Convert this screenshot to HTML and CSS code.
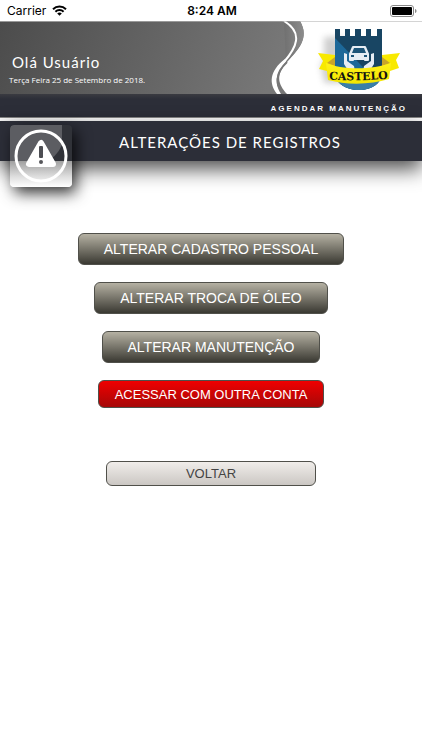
FILE: index.html
```html
<!DOCTYPE html>
<html lang="pt-br">
<head>
   <meta charset="UTF-8">
   <meta name="viewport" content="width=device-width, initial-scale=1.0">
   <title>Castelo</title>
   <link rel="stylesheet" href="styles.css">
</head>

<body>
   <div class="status">
      <div class="operadora">
         <span>Carrier</span>
         <svg width="15" height="11" viewBox="0 0 15 11" fill="none" stroke="#000" stroke-width="2">
            <path d="M1 4.2C4.6.7 10.4.7 14 4.2"/>
            <path d="M3.4 6.7c2.3-2.2 5.9-2.2 8.2 0"/>
            <path d="M5.2 8.4c1.3-1.2 3.3-1.2 4.6 0L7.5 10.8z" fill="#000" stroke="none"/>
         </svg>
      </div>
      <div class="hora">8:24 AM</div>
      <svg class="bateria" width="27" height="12" viewBox="0 0 27 12">
         <rect x=".5" y=".5" width="23" height="11" rx="2.5" fill="#fff" stroke="#888"/>
         <rect x="2" y="2" width="20" height="8" rx="1" fill="#000"/>
         <path d="M25 4c2 .6 2 3.400 0 4z" fill="#888"/>
      </svg>
   </div>

   <header>
      <div class="topo">
         <div class="saudacao">
            <h2>Olá Usuário</h2>
            <p>Terça Feira 25 de Setembro de 2018.</p>
         </div>

         <svg class="marca" width="160" height="73" viewBox="0 0 160 73" role="img" aria-label="Castelo">
            <defs>
               <filter id="sombra" x="-30%" y="-30%" width="160%" height="160%">
                  <feGaussianBlur stdDeviation="3"/>
               </filter>
               <linearGradient id="faixa" x1="0" x2="0" y1="0" y2="1">
                  <stop offset="0" stop-color="#fff21a"/>
                  <stop offset="1" stop-color="#f3e500"/>
               </linearGradient>
               <linearGradient id="curva" x1="0" x2="1" y1="0" y2="0">
                  <stop offset="0" stop-color="#707070"/>
                  <stop offset="1" stop-color="#8c8c8c"/>
               </linearGradient>
               <clipPath id="escudo">
                  <path d="M73 8h5v7h5V8h5v7h5V8h6v7h5V8h5v7h6V8h5v44c0 10-10 17-23 17S73 62 73 52z"/>
               </clipPath>
            </defs>

            <!-- curva -->
            <path d="M38 0C48 17 36 29 26 40 13 54 16 63 25 73H160V0z" fill="#fff"/>
            <path d="M22 0h16C48 17 36 29 24 41z" fill="url(#curva)"/>
            <path d="M22 0C42 12 34 27 22 41" fill="none" stroke="#fff" stroke-width="2"/>
            <path d="M23 38C7 50 7 63 15 73h4C11 60 15 51 24 41z" fill="#fff"/>
            <path d="M25 41C13 52 13 64 22 73" fill="none" stroke="#777" stroke-width="2"/>
            <path d="M160 0H20" stroke="#aaa" stroke-width="1"/>

            <!-- logo -->
            <path d="M62 16h20v46H62zM58 42h20v18H62z" fill="#777" opacity=".35" filter="url(#sombra)"/>
            <g clip-path="url(#escudo)">
               <path d="M73 0h47v73H73z" fill="#184563"/>
               <path d="M73 17l50 52v4H73z" fill="#1d6899"/>
               <path d="M73 60h50v10H73z" fill="#3a7fa8"/>
            </g>
            <path d="M91 26h12l3 7v6h-3v-1H91v1h-3v-6z" fill="#e6edf4" stroke="#e6edf4" stroke-width="2" stroke-linejoin="round"/>
            <path d="M92 27h10l2 5H90z" fill="#1d5478"/>
            <path d="M89 35h3m10 0h3" stroke="#1d5478" stroke-width="2"/>
            <path d="M82 32l3 1v7l7 5 1 6h-6l-5-8zM112 32l-3 1v7l-7 5-1 6h6l5-8z" fill="#e6edf4"/>
            <path d="M56 32l17 2v16l-8 0-8-2 4-8zM138 32l-18 2v16l8 0 9-3-3-8z" fill="#f8e900"/>
            <path d="M65 42l8-6v9zM128 42l-8-6v9z" fill="#c9a52a"/>
            <path d="M64 42C80 49 110 49 129 42l-2 16C108 64 84 64 66 59z" fill="url(#faixa)"/>
            <path id="arco" d="M62 58Q96 61 131 57" fill="none"/>
            <text class="nome"><textPath href="#arco" startOffset="50%">CASTELO</textPath></text>
         </svg>
      </div>
      <div class="agendar"><a href="#">AGENDAR MANUTENÇÃO</a></div>
   </header>

   <div class="titulo">
      <svg class="alerta" width="62" height="62" viewBox="0 0 62 62">
         <defs>
            <linearGradient id="base" x1="0" x2="0" y1="0" y2="1">
               <stop offset="0" stop-color="#a0a0a0"/>
               <stop offset=".6" stop-color="#dedede"/>
               <stop offset="1" stop-color="#fff"/>
            </linearGradient>
         </defs>
         <path d="M4 0h54a4 4 0 0 1 4 4v32H0V4a4 4 0 0 1 4-4z" fill="#303238"/>
         <path d="M4 0h48v20Q46 33 36 36H0V4a4 4 0 0 1 4-4z" fill="#5c5d62"/>
         <path d="M0 36h62v22a4 4 0 0 1-4 4H4a4 4 0 0 1-4-4z" fill="url(#base)"/>
         <circle cx="31" cy="31" r="25" fill="none" stroke="#fff" stroke-width="3"/>
         <path d="M31 18L19 39h24z" fill="#fff" stroke="#fff" stroke-width="6" stroke-linejoin="round"/>
         <path d="M30 22h2v10h-2z" fill="#4d4e53" stroke="#4d4e53" stroke-width="2" stroke-linejoin="round"/>
         <circle cx="31" cy="37" r="2" fill="#55565a"/>
      </svg>
      <h1>ALTERAÇÕES DE REGISTROS</h1>
   </div>

   <main>
      <button class="botao">ALTERAR CADASTRO PESSOAL</button>
      <button class="botao">ALTERAR TROCA DE ÓLEO</button>
      <button class="botao">ALTERAR MANUTENÇÃO</button>
      <button class="botao sair">ACESSAR COM OUTRA CONTA</button>
      <button class="botao voltar">VOLTAR</button>
   </main>
</body>
</html>
```
FILE: styles.css
```css
* {
   box-sizing: border-box;
}

body {
   margin: 0;
   background: #fff;
   font-family: 'Liberation Sans', Arial, sans-serif;
}

h1,
h2,
p {
   margin: 0;
   font-family: Lato, sans-serif;
   font-weight: normal;
}

.status {
   display: grid;
   grid-template-columns: 1fr auto 1fr;
   align-items: center;
   height: 21px;
   padding: 0 5px 0 7px;
   font-family: Inter, sans-serif;
   font-size: 12px;
}

.operadora {
   display: flex;
   align-items: center;
   gap: 6px;
}

.hora {
   font-weight: 600;
}

.bateria {
   justify-self: end;
}

header {
   border-bottom: 1px solid #888;
}

.topo {
   display: flex;
   justify-content: space-between;
   background: linear-gradient(110deg, #4c4c4c, #777 65%);
   box-shadow: inset 0 1px #999;
}

.saudacao {
   padding: 31px 0 0 9px;
   color: #fff;
}

.saudacao h2 {
   padding-left: 3px;
   font-size: 15px;
   line-height: 20px;
   letter-spacing: 1px;
}

.saudacao p {
   font-family: 'Open Sans', sans-serif;
   font-size: 8px;
   line-height: 16px;
}

.marca {
   display: block;
}

.nome {
   font-family: 'DejaVu Serif', serif;
   font-size: 11px;
   font-weight: bold;
   text-anchor: middle;
   fill: #111;
}

.agendar {
   height: 23px;
   padding-right: 15px;
   background: linear-gradient(#3a3b41, #2c2e38 5px);
   font-size: 8px;
   line-height: 29px;
   text-align: right;
}

.agendar a {
   color: #fff;
   font-weight: bold;
   letter-spacing: 2px;
   text-decoration: none;
}

.titulo {
   position: relative;
   height: 40px;
   margin-top: 3px;
   padding-left: 38px;
   background: #2c2e38;
   color: #fff;
   text-align: center;
   box-shadow: 0 8px 20px rgba(0, 0, 0, 0.7);
}

.titulo h1 {
   font-size: 15px;
   line-height: 42px;
   letter-spacing: 1px;
}

.alerta {
   position: absolute;
   top: 4px;
   left: 10px;
   border-radius: 4px;
   box-shadow: 4px 6px 15px rgba(0, 0, 0, 0.8);
}

main {
   display: flex;
   flex-direction: column;
   align-items: center;
   gap: 17px;
   padding: 72px 0 40px;
}

.botao {
   height: 32px;
   padding: 0 25px;
   border: 1px solid #50504a;
   border-radius: 6px;
   background: linear-gradient(#b5b1a3, #3a3932);
   color: #fff;
   font-family: inherit;
   font-size: 14px;
   cursor: pointer;
}

.sair {
   height: 28px;
   padding: 0 16px;
   background: linear-gradient(#f00000, #a60808);
   font-size: 13px;
}

.voltar {
   width: 210px;
   height: 25px;
   margin-top: 36px;
   background: linear-gradient(#f0edea, #cbc7c3);
   color: #444;
   font-size: 13px;
}
```
